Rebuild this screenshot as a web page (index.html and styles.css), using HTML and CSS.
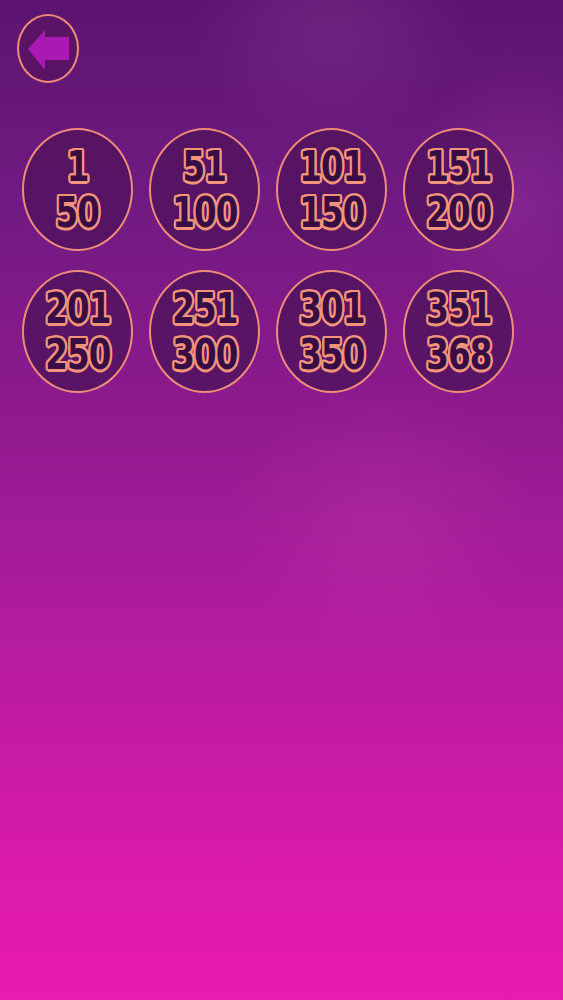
FILE: index.html
```html
<!DOCTYPE html>
<html>
<head>
<meta charset="utf-8">
<link rel="stylesheet" href="styles.css">
</head>
<body>
<div class="screen">
  <div class="topbar">
    <button class="back" aria-label="Back">
      <svg viewBox="0 0 62 69" width="62" height="69">
        <path d="M11 35 L28 16 L28 23 L52 23 L52 46 L28 46 L28 56 Z" fill="#ab19b4"/>
      </svg>
    </button>
  </div>
  <div class="grid">
    <div class="level"><span>1</span><span>50</span></div>
    <div class="level"><span>51</span><span>100</span></div>
    <div class="level"><span>101</span><span>150</span></div>
    <div class="level"><span>151</span><span>200</span></div>
    <div class="level"><span>201</span><span>250</span></div>
    <div class="level"><span>251</span><span>300</span></div>
    <div class="level"><span>301</span><span>350</span></div>
    <div class="level"><span>351</span><span>368</span></div>
  </div>
</div>
</body>
</html>
```
FILE: styles.css
```css
html, body {
  margin: 0;
  padding: 0;
}
body {
  width: 563px;
  height: 1000px;
  overflow: hidden;
  font-family: "DejaVu Sans Condensed", "DejaVu Sans", sans-serif;
}
.screen {
  width: 563px;
  height: 1000px;
  background:
    radial-gradient(ellipse 200px 160px at 330px 30px, rgba(140,60,150,0.35), rgba(140,60,150,0) 70%),
    radial-gradient(ellipse 160px 200px at 520px 200px, rgba(170,60,170,0.3), rgba(170,60,170,0) 70%),
    radial-gradient(ellipse 220px 200px at 380px 520px, rgba(200,60,180,0.25), rgba(200,60,180,0) 70%),
    linear-gradient(180deg, #5c1470 0%, #6e1a80 18%, #8a1a8c 38%, #a51c98 55%, #c21ba2 72%, #dc1aaa 88%, #e81cae 100%);
  box-sizing: border-box;
  padding: 14px 0 0 17px;
}
.topbar {
  display: flex;
}
.back {
  width: 62px;
  height: 69px;
  padding: 0;
  margin: 0;
  border: 2px solid #ee8a78;
  border-radius: 50%;
  background: #5a1466;
  box-sizing: border-box;
  display: flex;
  align-items: center;
  justify-content: center;
  overflow: hidden;
}
.back svg {
  display: block;
  flex: none;
}
.grid {
  display: grid;
  grid-template-columns: repeat(4, 111px);
  column-gap: 16px;
  row-gap: 19px;
  margin-top: 45px;
  margin-left: 5px;
}
.level {
  width: 111px;
  height: 123px;
  box-sizing: border-box;
  border: 2px solid #ee8c7a;
  border-radius: 50%;
  background: rgba(84, 20, 96, 0.9);
  display: flex;
  flex-direction: column;
  align-items: center;
  justify-content: center;
  gap: 5px;
}
.level span {
  display: block;
  font-weight: bold;
  font-size: 42px;
  line-height: 41px;
  color: #380c44;
  letter-spacing: -1px;
  transform: scaleX(0.86);
  text-shadow:
    2.5px 0 0 #f2937c, -2.5px 0 0 #f2937c, 0 2.5px 0 #f2937c, 0 -2.5px 0 #f2937c,
    1.8px 1.8px 0 #f2937c, -1.8px 1.8px 0 #f2937c, 1.8px -1.8px 0 #f2937c, -1.8px -1.8px 0 #f2937c,
    2.3px 1px 0 #f2937c, -2.3px 1px 0 #f2937c, 2.3px -1px 0 #f2937c, -2.3px -1px 0 #f2937c,
    1px 2.3px 0 #f2937c, -1px 2.3px 0 #f2937c, 1px -2.3px 0 #f2937c, -1px -2.3px 0 #f2937c;
}
```
